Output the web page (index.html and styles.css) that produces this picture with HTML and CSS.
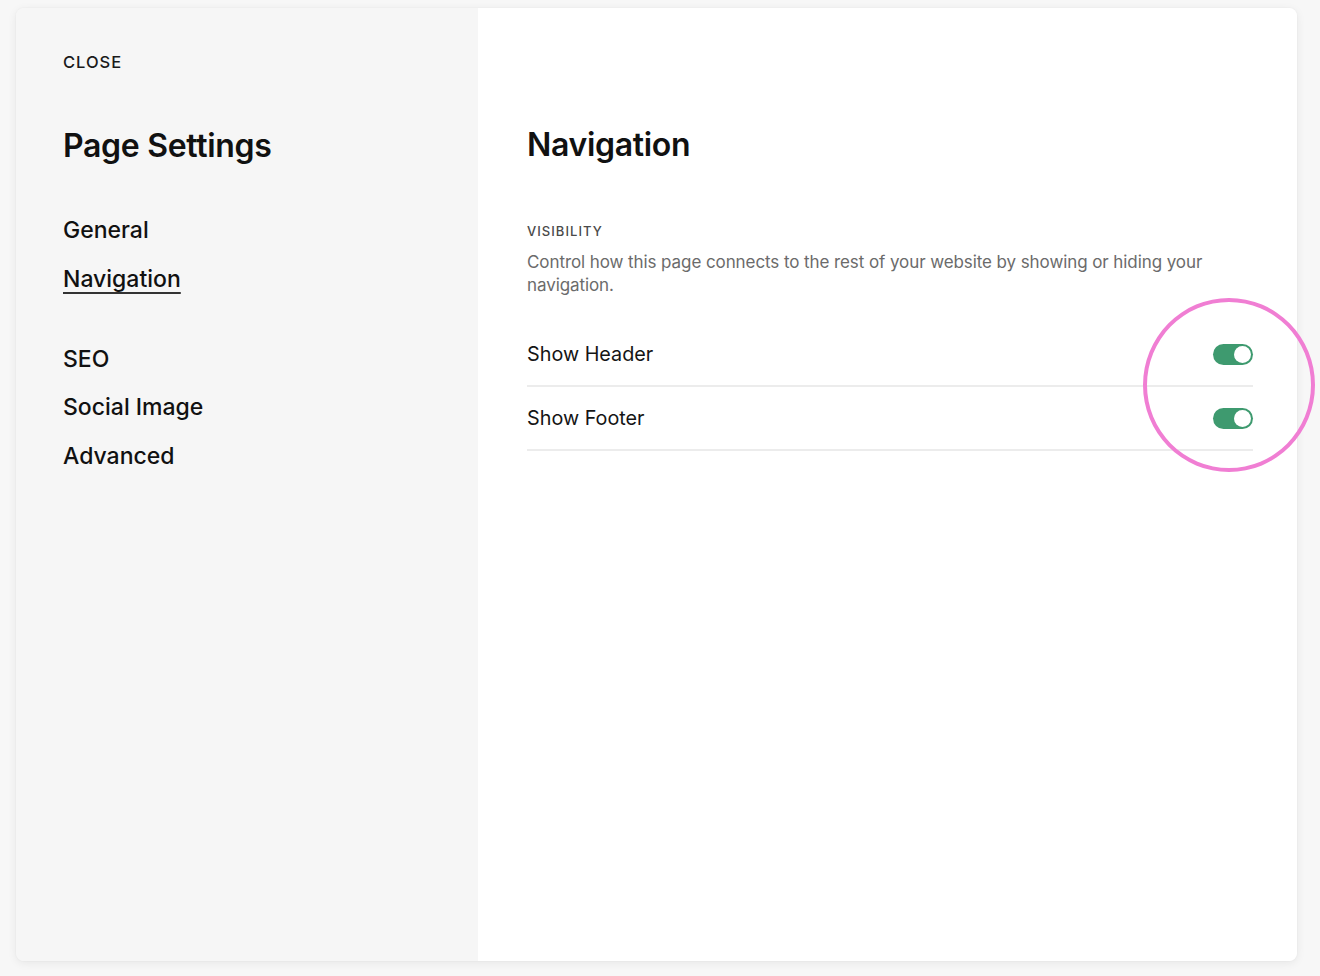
FILE: index.html
```html
<!DOCTYPE html>
<html lang="en">
<head>
<meta charset="utf-8">
<title>Page Settings</title>
<link rel="stylesheet" href="styles.css">
</head>
<body>
<div class="modal">
  <aside class="sidebar">
    <div class="close">CLOSE</div>
    <h1 class="title">Page Settings</h1>
    <nav class="menu">
      <div class="group">
        <a class="item">General</a>
        <a class="item active">Navigation</a>
      </div>
      <div class="group">
        <a class="item">SEO</a>
        <a class="item">Social Image</a>
        <a class="item">Advanced</a>
      </div>
    </nav>
  </aside>
  <main class="content">
    <h2 class="heading">Navigation</h2>
    <div class="label">VISIBILITY</div>
    <p class="desc">Control how this page connects to the rest of your website by showing or hiding your navigation.</p>
    <div class="rows">
      <div class="row">
        <span class="row-label">Show Header</span>
        <span class="toggle"><span class="knob"></span></span>
      </div>
      <div class="row">
        <span class="row-label">Show Footer</span>
        <span class="toggle"><span class="knob"></span></span>
      </div>
    </div>
  </main>
  <div class="highlight"></div>
</div>
</body>
</html>
```

FILE: styles.css
```css
* { box-sizing: border-box; }

html, body {
  margin: 0;
  padding: 0;
}

body {
  background: #f7f7f7;
  font-family: "Inter", "Liberation Sans", sans-serif;
  color: #111;
  width: 1320px;
  height: 976px;
  overflow: hidden;
}

.modal {
  position: relative;
  margin: 8px 0 0 16px;
  width: 1281px;
  height: 953px;
  display: flex;
  border-radius: 8px;
  box-shadow: 0 2px 10px rgba(0, 0, 0, 0.07), 0 0 2px rgba(0, 0, 0, 0.05);
}

.sidebar {
  width: 462px;
  flex: none;
  background: #f6f6f6;
  border-radius: 8px 0 0 8px;
  padding: 44px 0 0 47px;
}

.close {
  font-size: 16.5px;
  line-height: 20px;
  font-weight: 500;
  letter-spacing: 0.06em;
  color: #1a1a1a;
}

.title {
  margin: 56px 0 0;
  font-size: 32px;
  line-height: 36px;
  font-weight: 600;
  letter-spacing: -0.01em;
  color: #111;
}

.menu {
  margin-top: 52px;
  display: flex;
  flex-direction: column;
  gap: 52px;
}

.group {
  display: flex;
  flex-direction: column;
  gap: 20.5px;
}

.item {
  font-size: 23px;
  line-height: 28px;
  font-weight: 500;
  color: #111;
  align-self: flex-start;
}

.item.active {
  text-decoration: underline;
  text-decoration-thickness: 2px;
  text-underline-offset: 5px;
  text-decoration-skip-ink: none;
  text-decoration-color: #333;
}

.content {
  flex: 1;
  background: #fff;
  border-radius: 0 8px 8px 0;
  padding: 119px 44px 0 49px;
}

.heading {
  margin: 0;
  font-size: 32px;
  line-height: 36px;
  font-weight: 600;
  letter-spacing: -0.01em;
  color: #111;
}

.label {
  margin-top: 60px;
  font-size: 13px;
  line-height: 16px;
  font-weight: 500;
  letter-spacing: 0.08em;
  color: #4a4a4a;
}

.desc {
  margin: 12px 0 0;
  font-size: 17px;
  line-height: 23px;
  color: #6b6b6b;
  letter-spacing: -0.005em;
}

.rows {
  margin-top: 26px;
}

.row {
  height: 64px;
  display: flex;
  align-items: center;
  justify-content: space-between;
  border-bottom: 2px solid #ececec;
}

.row-label {
  font-size: 19.8px;
  color: #151515;
}

.toggle {
  width: 40px;
  height: 21px;
  border-radius: 11px;
  background: #3e9a6f;
  display: flex;
  align-items: center;
  justify-content: flex-end;
  padding-right: 2px;
}

.knob {
  width: 17px;
  height: 17px;
  border-radius: 50%;
  background: #fff;
}

.highlight {
  position: absolute;
  left: 1127px;
  top: 290px;
  width: 172px;
  height: 174px;
  border: 4px solid #f07ed3;
  border-radius: 50%;
  pointer-events: none;
}
```
